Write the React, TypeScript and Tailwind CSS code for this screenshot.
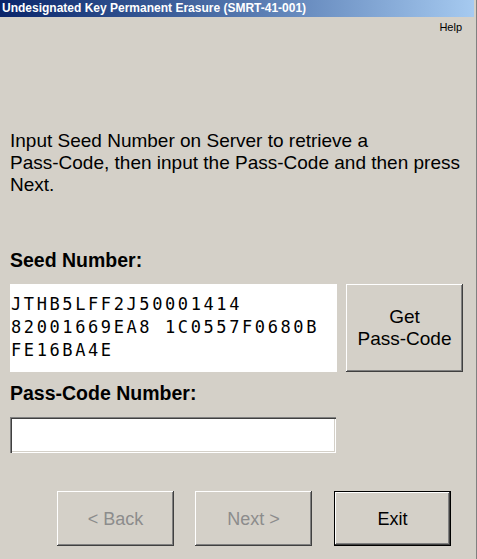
const raised =
  "shadow-[inset_-1px_-1px_#404040,inset_1px_1px_#ffffff,inset_-2px_-2px_#808080,inset_2px_2px_#d4d0c8]";

type WinButtonProps = {
  label: string;
  disabled?: boolean;
  isDefault?: boolean;
  className?: string;
};

const WinButton = ({ label, disabled, isDefault, className }: WinButtonProps) => {
  return (
    <div
      className={`w-[117px] h-[55px] bg-[#d4d0c8] ${isDefault ? "border border-black" : ""} ${className ?? ""}`}
    >
      <div
        className={`w-full h-full flex items-center justify-center text-[18px] leading-[22px] ${raised} ${
          disabled ? "text-[#8c8c8c]" : "text-black"
        }`}
      >
        {label}
      </div>
    </div>
  );
};

const App = () => {
  return (
    <div
      className="w-[477px] h-[559px] bg-[#d4d0c8] border-r border-[#808080] overflow-hidden text-black"
      style={{ fontFamily: '"Liberation Sans", Arial, sans-serif' }}
    >
      {/* title bar */}
      <div className="h-[17px] mr-[2px] bg-gradient-to-r from-[#0a246a] to-[#a6caf0] flex items-center pl-[2px]">
        <span className="text-white font-bold text-[12px] leading-[17px] whitespace-nowrap">
          Undesignated Key Permanent Erasure (SMRT-41-001)
        </span>
      </div>

      {/* menu */}
      <div className="mt-[4px] h-[13px] flex justify-end pr-[14px] text-[11px] leading-[13px]">
        Help
      </div>

      <div className="px-[10px]">
        {/* instructions */}
        <p className="mt-[96px] text-[19px] leading-[22px] whitespace-nowrap">
          Input Seed Number on Server to retrieve a
          <br />
          Pass-Code, then input the Pass-Code and then press
          <br />
          Next.
        </p>

        {/* seed number */}
        <div className="mt-[53px] h-[22px] text-[19.5px] leading-[22px] font-bold">
          Seed Number:
        </div>
        <div className="mt-[13px] flex gap-[9px]">
          <div
            className="w-[327px] h-[88px] bg-white pt-[9px] pl-[1px] text-[17px] leading-[23px] tracking-[2.6px] whitespace-nowrap"
            style={{ fontFamily: '"DejaVu Sans Mono", monospace' }}
          >
            JTHB5LFF2J50001414
            <br />
            82001669EA8 1C0557F0680B
            <br />
            FE16BA4E
          </div>
          <div
            className={`w-[117px] h-[88px] flex flex-col items-center justify-center text-[19px] leading-[22px] ${raised}`}
          >
            <span>Get</span>
            <span>Pass-Code</span>
          </div>
        </div>

        {/* pass code */}
        <div className="mt-[10px] h-[22px] text-[19.5px] leading-[22px] font-bold">
          Pass-Code Number:
        </div>
        <input
          type="text"
          className="mt-[13px] block w-[326px] h-[36px] bg-white outline-none shadow-[inset_1px_1px_#808080,inset_2px_2px_#404040,inset_-1px_-1px_#ffffff,inset_-2px_-2px_#d4d0c8]"
        />

        {/* navigation */}
        <div className="mt-[38px] ml-[47px] flex">
          <WinButton label="< Back" disabled />
          <WinButton label="Next >" disabled className="ml-[21px]" />
          <WinButton label="Exit" isDefault className="ml-[22px]" />
        </div>
      </div>
    </div>
  );
};

export default App;
